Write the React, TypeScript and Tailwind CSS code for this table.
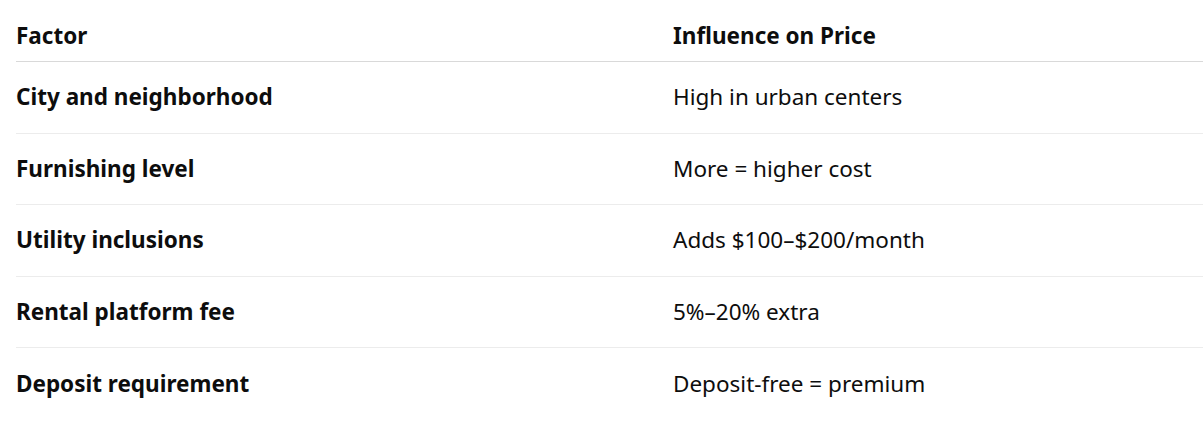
import React from "react";

const rows: [string, string][] = [
  ["City and neighborhood", "High in urban centers"],
  ["Furnishing level", "More = higher cost"],
  ["Utility inclusions", "Adds $100–$200/month"],
  ["Rental platform fee", "5%–20% extra"],
  ["Deposit requirement", "Deposit-free = premium"],
];

export default function App() {
  return (
    <div
      className="w-[1203px] h-[431px] bg-white overflow-hidden pl-4 text-[#0d0d0d]"
      style={{ fontFamily: '"Noto Sans", "Open Sans", sans-serif' }}
    >
      <div className="grid grid-cols-[657px_1fr] h-[62px] border-b border-[#d9d9d9] text-[22.5px] leading-[28px] font-bold pt-[22px]">
        <div>Factor</div>
        <div>Influence on Price</div>
      </div>
      {rows.map(([a, b], i) => (
        <div
          key={a}
          className={`grid grid-cols-[657px_1fr] items-center h-[71.5px] text-[22.5px] leading-[28px] ${
            i < rows.length - 1 ? "border-b border-[#ececec]" : ""
          }`}
        >
          <div className="font-bold">{a}</div>
          <div>{b}</div>
        </div>
      ))}
    </div>
  );
}
